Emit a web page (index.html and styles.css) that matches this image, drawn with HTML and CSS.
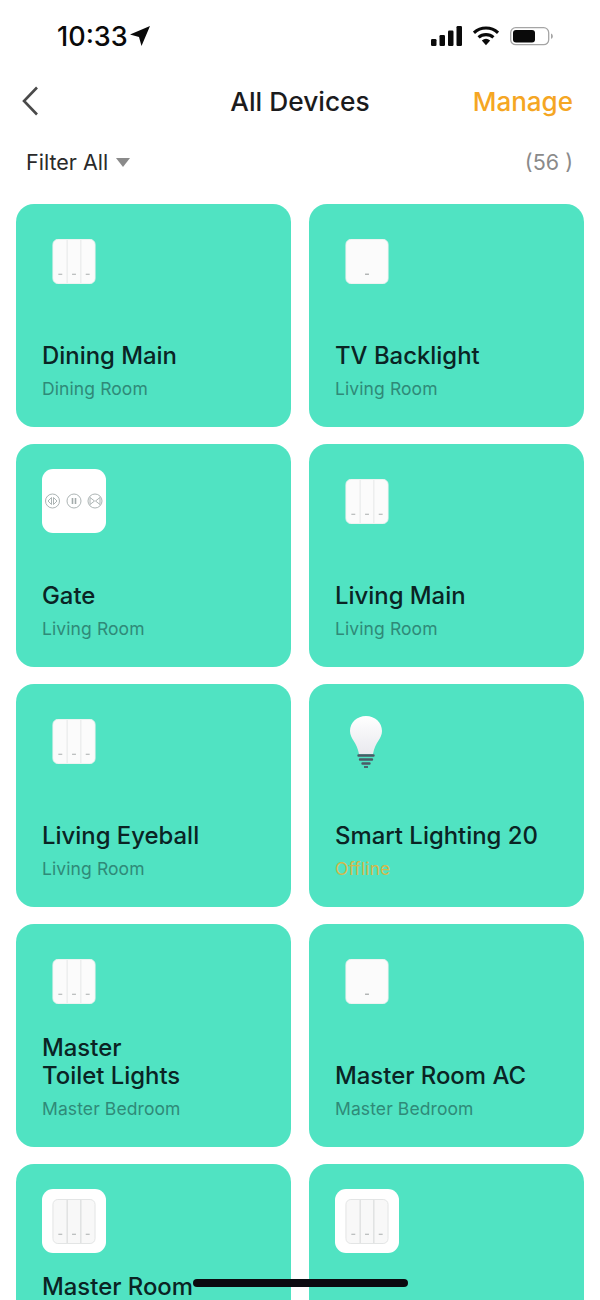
FILE: index.html
```html
<!DOCTYPE html>
<html>
<head>
<meta charset="utf-8">
<title>All Devices</title>
<link rel="stylesheet" href="styles.css">
</head>
<body>
<svg class="defs" width="0" height="0">
  <symbol id="sw3" viewBox="0 0 44 46">
    <rect x="0.5" y="0.5" width="43" height="45" rx="5" fill="#fbfbfb" stroke="#f1f3f2"/>
    <path d="M15 1V45M29 1V45" stroke="#e4e6e6" stroke-width="1"/>
    <path d="M6 36h4M20 36h4M34 36h4" stroke="#a9adad" stroke-width="1.2"/>
  </symbol>
  <symbol id="sw1" viewBox="0 0 44 46">
    <rect x="0.5" y="0.5" width="43" height="45" rx="5" fill="#fbfbfb" stroke="#f1f3f2"/>
    <path d="M20 36h4" stroke="#a0a4a4" stroke-width="1.2"/>
  </symbol>
  <symbol id="sw3b" viewBox="0 0 44 46">
    <rect x="0.5" y="0.5" width="43" height="45" rx="5" fill="#f8f8f8" stroke="#e2e4e4"/>
    <path d="M15 1V45M29 1V45" stroke="#d4d6d6" stroke-width="1"/>
    <path d="M6 36h4M20 36h4M34 36h4" stroke="#a9adad" stroke-width="1.2"/>
  </symbol>
</svg>

<div class="status">
  <div class="time">10:33
    <svg class="loc" width="22" height="22" viewBox="0 0 22 22"><path d="M21 1 1 9.500 10 12 12.500 21z" fill="#0a0a0a"/></svg>
  </div>
  <div class="status-right">
    <svg class="sig" width="32" height="20" viewBox="0 0 32 20"><rect x="0" y="13" width="5.500" height="7" rx="1.200"/><rect x="8.500" y="9" width="5.500" height="11" rx="1.200"/><rect x="17" y="4.500" width="5.500" height="15.500" rx="1.200"/><rect x="25.500" y="0" width="5.500" height="20" rx="1.200"/></svg>
    <svg width="26" height="20" viewBox="0 0 28 20"><path d="M1 6.500a19 19 0 0 1 26 0" fill="none" stroke="#0a0a0a" stroke-width="3.400"/><path d="M6 11.500a12 12 0 0 1 16 0" fill="none" stroke="#0a0a0a" stroke-width="3.400"/><path d="M9.500 14.800a7 7 0 0 1 9 0L14 20z"/></svg>
    <svg width="44" height="20" viewBox="0 0 44 20"><rect x="0.700" y="1.700" width="38" height="17" rx="5" fill="none" stroke="#a5a5a5" stroke-width="1.300"/><rect x="3" y="4" width="22" height="12.500" rx="3"/><path d="M41 7.500c1.200.4 1.800 1.400 1.800 2.700s-.6 2.200-1.800 2.600z" fill="#a5a5a5"/></svg>
  </div>
</div>

<div class="nav">
  <svg class="back" width="17" height="30" viewBox="0 0 17 30"><path d="M15 1.500 2 15l13 13.500" fill="none" stroke="#4a4a4a" stroke-width="2.600"/></svg>
  <div class="nav-title">All Devices</div>
  <div class="manage">Manage</div>
</div>

<div class="filter">
  <div class="filter-left">Filter All <span class="caret"></span></div>
  <div class="count">(56 )</div>
</div>

<div class="grid">
  <div class="card">
    <div class="icon"><svg class="sw"><use href="#sw3"/></svg></div>
    <div class="name">Dining Main</div>
    <div class="room">Dining Room</div>
  </div>
  <div class="card">
    <div class="icon"><svg class="sw"><use href="#sw1"/></svg></div>
    <div class="name">TV Backlight</div>
    <div class="room">Living Room</div>
  </div>
  <div class="card">
    <div class="icon icon-box">
      <svg width="64" height="64" viewBox="0 0 64 64" fill="none" stroke="#a3abab" stroke-width="0.900">
        <circle cx="10.500" cy="32" r="7"/><path d="M9.500 28.500 6 32l3.500 3.500zM11.500 28.500l3.500 3.500-3.500 3.500z"/>
        <circle cx="32" cy="32" r="7"/><path d="M30.500 29v6M33.500 29v6" stroke-width="1.600"/>
        <circle cx="53" cy="32" r="7"/><path d="M48 28.500l4.500 3.500-4.500 3.500zM58 28.500l-4.500 3.500 4.500 3.500z"/>
      </svg>
    </div>
    <div class="name">Gate</div>
    <div class="room">Living Room</div>
  </div>
  <div class="card">
    <div class="icon"><svg class="sw"><use href="#sw3"/></svg></div>
    <div class="name">Living Main</div>
    <div class="room">Living Room</div>
  </div>
  <div class="card">
    <div class="icon"><svg class="sw"><use href="#sw3"/></svg></div>
    <div class="name">Living Eyeball</div>
    <div class="room">Living Room</div>
  </div>
  <div class="card">
    <div class="icon">
      <svg class="bulb" width="36" height="56" viewBox="0 0 36 56">
        <defs><linearGradient id="glass" x1="0" y1="0" x2="0" y2="1"><stop offset="0" stop-color="#ffffff"/><stop offset="1" stop-color="#e9e9ee"/></linearGradient></defs>
        <path d="M17 2C8 2 1 8.500 1 17c0 8 7 11 9 23h14c2-12 9-15 9-23C33 8.500 26 2 17 2z" fill="url(#glass)"/>
        <path d="M9.500 41.500h15M11 45.500h12M13.500 49.500h7" stroke="#4c5a66" stroke-width="2.400" stroke-linecap="round"/>
        <path d="M15 53h4" stroke="#4c5a66" stroke-width="1.800"/>
      </svg>
    </div>
    <div class="name">Smart Lighting 20</div>
    <div class="room offline">Offline</div>
  </div>
  <div class="card">
    <div class="icon"><svg class="sw"><use href="#sw3"/></svg></div>
    <div class="name">Master<br>Toilet Lights</div>
    <div class="room">Master Bedroom</div>
  </div>
  <div class="card">
    <div class="icon"><svg class="sw"><use href="#sw1"/></svg></div>
    <div class="name">Master Room AC</div>
    <div class="room">Master Bedroom</div>
  </div>
  <div class="card">
    <div class="icon icon-box"><svg class="sw"><use href="#sw3b"/></svg></div>
    <div class="name name-cut">Master Room</div>
  </div>
  <div class="card">
    <div class="icon icon-box"><svg class="sw"><use href="#sw3b"/></svg></div>
  </div>
</div>

<div class="home-bar"></div>
</body>
</html>
```

FILE: styles.css
```css
* {margin:0; padding:0; box-sizing:border-box;}
html, body {height:1300px; overflow:hidden;}
body {position:relative; background:#fff; font-family:Inter, "Liberation Sans", sans-serif; color:#1b1b1d;}
.defs {display:block; height:0;}

.status {height:72px; display:flex; justify-content:space-between; align-items:center; padding:0 46px 0 57px;}
.time {display:flex; align-items:center; gap:1px; font-size:27px; font-weight:500; color:#0a0a0a;}
.status-right {display:flex; align-items:center; gap:11px;}
.status-right svg {display:block; fill:#0a0a0a;}
.sig {margin-right:-1px;}

.nav {height:58px; display:flex; align-items:center; justify-content:space-between; padding:0 27px 0 22px; position:relative;}
.nav-title {position:absolute; left:0; right:0; text-align:center; font-size:26.300px; font-weight:500;}
.manage {font-size:26px; font-weight:500; color:#f5a623;}
.back {display:block;}

.filter {height:64px; display:flex; align-items:center; justify-content:space-between; padding:0 27px 0 26px; font-size:21.500px;}
.filter-left {display:flex; align-items:center; gap:8px; color:#2a2a2a;}
.caret {width:0; height:0; border-left:7.500px solid transparent; border-right:7.500px solid transparent; border-top:9px solid #8a8a8a;}
.count {color:#8a8a8a;}

.grid {display:grid; grid-template-columns:275px 275px; column-gap:18px; row-gap:17px; padding:0 16px; margin-top:10px;}
.card {height:223px; background:#50e3c2; border-radius:18px; padding:25px 26px 0 26px; display:flex; flex-direction:column;}
.icon {width:64px; height:64px; display:flex; align-items:center; justify-content:center;}
.icon-box {background:#fff; border-radius:11px;}
.sw {width:44px; height:45px; display:block; margin-top:1px;}
.bulb {display:block; margin-top:2px;}
.name {margin-top:auto; font-size:23.900px; line-height:28px; font-weight:500; color:#0a2424;}
.name-cut {margin-top:20px;}
.room {margin-top:8px; margin-bottom:27px; font-size:17.500px; line-height:22px; color:#2f8a78; letter-spacing:0.1px;}
.offline {color:#d4b84c;}

.home-bar {position:absolute; left:193px; top:1279px; width:215px; height:8px; border-radius:4px; background:#0b0b10;}
```
